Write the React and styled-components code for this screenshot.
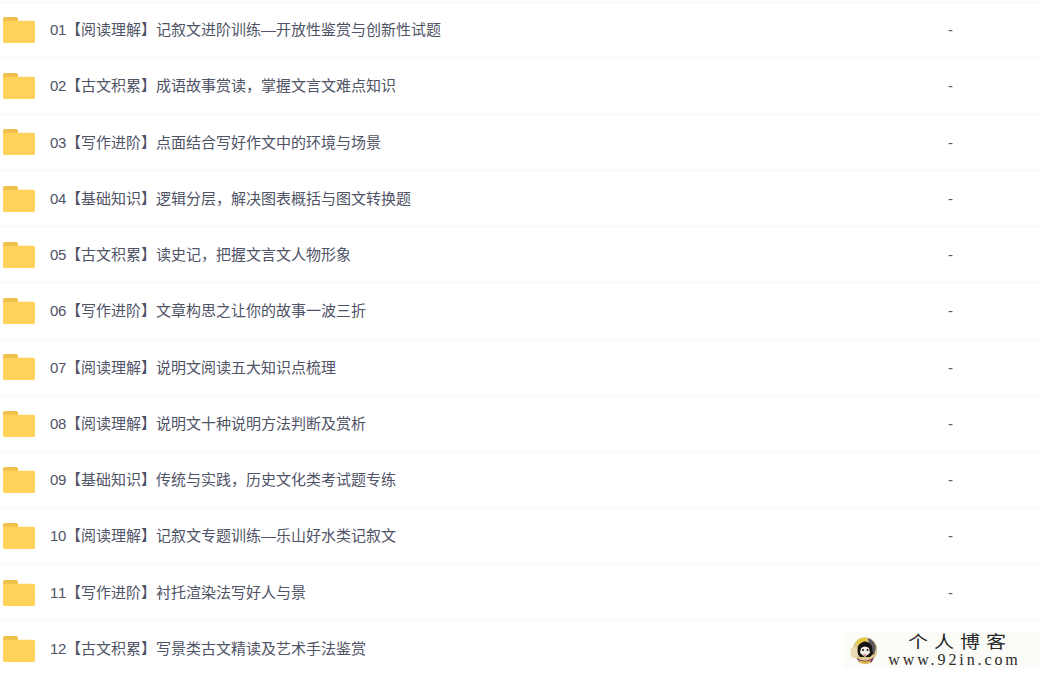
import React from "react";
import styled, { createGlobalStyle } from "styled-components";

const files = [
  { no: "01", name: "【阅读理解】记叙文进阶训练—开放性鉴赏与创新性试题", size: "-" },
  { no: "02", name: "【古文积累】成语故事赏读，掌握文言文难点知识", size: "-" },
  { no: "03", name: "【写作进阶】点面结合写好作文中的环境与场景", size: "-" },
  { no: "04", name: "【基础知识】逻辑分层，解决图表概括与图文转换题", size: "-" },
  { no: "05", name: "【古文积累】读史记，把握文言文人物形象", size: "-" },
  { no: "06", name: "【写作进阶】文章构思之让你的故事一波三折", size: "-" },
  { no: "07", name: "【阅读理解】说明文阅读五大知识点梳理", size: "-" },
  { no: "08", name: "【阅读理解】说明文十种说明方法判断及赏析", size: "-" },
  { no: "09", name: "【基础知识】传统与实践，历史文化类考试题专练", size: "-" },
  { no: "10", name: "【阅读理解】记叙文专题训练—乐山好水类记叙文", size: "-" },
  { no: "11", name: "【写作进阶】衬托渲染法写好人与景", size: "-" },
  // the watermark sits on top of this row's size
  { no: "12", name: "【古文积累】写景类古文精读及艺术手法鉴赏" },
];

const GlobalStyle = createGlobalStyle`
  html, body {
    margin: 0;
    padding: 0;
    background: #fff;
    overflow: hidden;
  }
`;

const Page = styled.div`
  position: relative;
  width: 1040px;
  height: 673px;
  overflow: hidden;
  padding-top: 0.97px;
  box-sizing: border-box;
  font-family: "Liberation Sans", "Noto Sans CJK SC", sans-serif;
`;

const Row = styled.div`
  display: grid;
  grid-template-columns: 50px 1fr 180px;
  align-items: center;
  height: 56.27px;
  padding-bottom: 2px;
  box-sizing: border-box;
  border-top: 1px solid #f5f5fa;

  &:first-child {
    margin-top: 1px;
    height: 55.27px;
    padding-bottom: 3px;
  }
`;

const Name = styled.span`
  font-size: 15px;
  color: #4f5366;
  white-space: nowrap;
`;

const Index = styled.span`
  letter-spacing: -0.33px;
  font-kerning: none;
`;

const Size = styled.span`
  font-size: 15px;
  color: #565968;
  padding: 2px 0 0 88px;
`;

const Icon = styled.svg`
  display: block;
  margin-left: 3px;
  margin-top: 2.5px;
`;

const Watermark = styled.div`
  position: absolute;
  right: 0;
  bottom: 5px;
  width: 197px;
  height: 36px;
  background: #fbfbf8;
  display: flex;
  align-items: center;
  gap: 12px;
  padding-left: 7px;
  box-sizing: border-box;
`;

const Mark = styled.div`
  display: flex;
  flex-direction: column;
  align-items: center;
  width: 131px;
  color: #2a2a2a;
  font-family: "Liberation Serif", "Noto Sans CJK SC", serif;
`;

const MarkTitle = styled.span`
  font-size: 17px;
  line-height: 18px;
  letter-spacing: 5px;
  margin-left: 11px;
  transform: scaleX(1.18);
`;

const MarkUrl = styled.span`
  font-size: 16px;
  line-height: 15px;
  letter-spacing: 2.9px;
  white-space: nowrap;
`;

const FolderIcon = () => (
  <Icon width="32" height="26" viewBox="0 0 32 26">
    <path d="M0 2a2 2 0 0 1 2-2h11a2 2 0 0 1 2 2v3H0z" fill="#efc04c" />
    <rect x="0" y="3.7" width="32" height="22.3" rx="1.5" fill="#ffd35a" />
  </Icon>
);

const Avatar = () => (
  <svg width="27" height="29" viewBox="0 0 27 29">
    <circle cx="15" cy="14" r="12.5" fill="#d9c98a" />
    <path d="M6 6a12 12 0 0 1 12-4l-3 5-6 4z" fill="#e6c845" />
    <path d="M18 2a12.5 12.5 0 0 1 8 10l-2 7-4-4z" fill="#5b5660" />
    <path d="M8 10q7-9 14 0l1 8-3 3H10l-3-4z" fill="#17130f" />
    <path d="M11 12q4-3 8 0l1 5-5 4-5-4z" fill="#f3efe6" />
    <circle cx="13" cy="14" r="1" fill="#111" />
    <circle cx="17.5" cy="14" r="1" fill="#111" />
    <path d="M13 18q2 1.500 4 0l-2 2z" fill="#a33" />
    <path d="M7 22q8 6 17-1l-2 5q-7 3-13 0z" fill="#7c2f72" />
    <path d="M9 24q6 3 12 0l-1 3q-5 1.500-10 0z" fill="#e2c23e" />
    <path d="M1 12q3-2 6 0l1 7-2 3H2l-2-4z" fill="#ecdcb6" />
  </svg>
);

const App = () => (
  <>
    <GlobalStyle />
    <Page>
      {files.map((file) => (
        <Row key={file.no}>
          <FolderIcon />
          <Name>
            <Index>{file.no}</Index>
            {file.name}
          </Name>
          {file.size && <Size>{file.size}</Size>}
        </Row>
      ))}
      <Watermark>
        <Avatar />
        <Mark>
          <MarkTitle>个人博客</MarkTitle>
          <MarkUrl>www.92in.com</MarkUrl>
        </Mark>
      </Watermark>
    </Page>
  </>
);

export default App;
